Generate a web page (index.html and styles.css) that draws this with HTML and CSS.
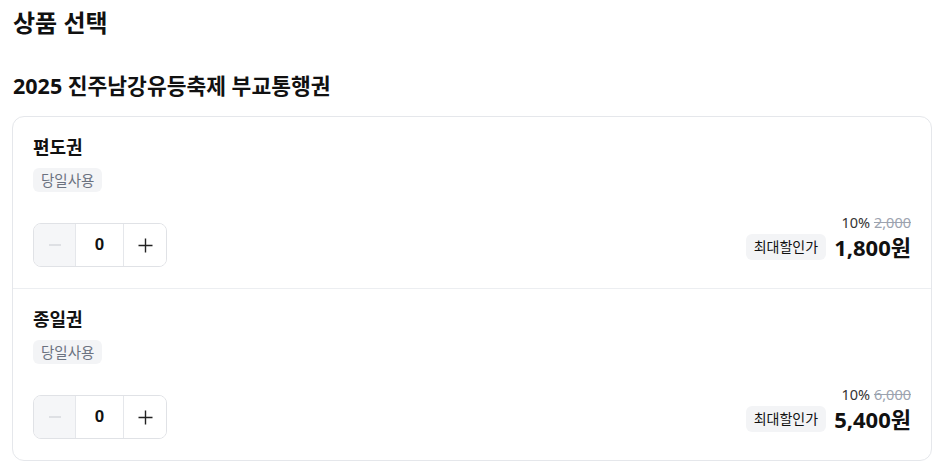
FILE: index.html
```html
<!DOCTYPE html>
<html lang="ko">
<head>
    <meta charset="UTF-8">
    <meta name="viewport" content="width=device-width, initial-scale=1.0">
    <title>상품 선택</title>
    <link rel="stylesheet" href="styles.css">
</head>
<body>
    <h1 class="page-title">상품 선택</h1>
    <h2 class="group-title">2025 진주남강유등축제 부교통행권</h2>
    <div class="product-card">
        <div class="product">
            <div class="product-name">편도권</div>
            <span class="tag">당일사용</span>
            <div class="product-bottom">
                <div class="stepper">
                    <button class="step minus" disabled aria-label="빼기">
                        <svg width="14" height="14" viewBox="0 0 14 14"><path d="M1 7h12" stroke="currentColor" stroke-width="1.3"/></svg>
                    </button>
                    <span class="count">0</span>
                    <button class="step plus" aria-label="더하기">
                        <svg width="15" height="15" viewBox="0 0 15 15"><path d="M0.5 7.5h14M7.5 0.5v14" stroke="currentColor" stroke-width="1.4"/></svg>
                    </button>
                </div>
                <div class="price-box">
                    <div class="discount">10% <s>2,000</s></div>
                    <div class="final">
                        <span class="badge">최대할인가</span>
                        <span class="price">1,800원</span>
                    </div>
                </div>
            </div>
        </div>
        <div class="product">
            <div class="product-name">종일권</div>
            <span class="tag">당일사용</span>
            <div class="product-bottom">
                <div class="stepper">
                    <button class="step minus" disabled aria-label="빼기">
                        <svg width="14" height="14" viewBox="0 0 14 14"><path d="M1 7h12" stroke="currentColor" stroke-width="1.3"/></svg>
                    </button>
                    <span class="count">0</span>
                    <button class="step plus" aria-label="더하기">
                        <svg width="15" height="15" viewBox="0 0 15 15"><path d="M0.5 7.5h14M7.5 0.5v14" stroke="currentColor" stroke-width="1.4"/></svg>
                    </button>
                </div>
                <div class="price-box">
                    <div class="discount">10% <s>6,000</s></div>
                    <div class="final">
                        <span class="badge">최대할인가</span>
                        <span class="price">5,400원</span>
                    </div>
                </div>
            </div>
        </div>
    </div>
</body>
</html>
```

FILE: styles.css
```css
body {
    margin: 0;
    padding: 0 13px 0 12px;
    font-family: "Noto Sans", "Noto Sans CJK KR", sans-serif;
    background: #ffffff;
    color: #111111;
}
.page-title {
    margin: 0;
    padding: 6px 0 0 1px;
    font-size: 24px;
    line-height: 34px;
    font-weight: 700;
}
.group-title {
    margin: 0;
    padding: 32px 0 0 1px;
    font-size: 21.5px;
    line-height: 28px;
    font-weight: 700;
}
.product-card {
    margin-top: 16px;
    border: 1px solid #e5e7eb;
    border-radius: 12px;
}
.product {
    padding: 19px 20px 21px;
    display: flex;
    flex-direction: column;
    align-items: flex-start;
}
.product + .product {
    border-top: 1px solid #eceef1;
}
.product-name {
    font-size: 18px;
    line-height: 22px;
    font-weight: 700;
}
.tag {
    margin-top: 10px;
    padding: 0 8px;
    background: #f3f4f6;
    border-radius: 6px;
    font-size: 14.5px;
    line-height: 24px;
    color: #6b7280;
}
.product-bottom {
    margin-top: 20px;
    align-self: stretch;
    display: flex;
    justify-content: space-between;
    align-items: flex-end;
}
.stepper {
    display: flex;
    height: 44px;
    border: 1px solid #e0e2e6;
    border-radius: 8px;
    overflow: hidden;
    box-sizing: border-box;
}
.step {
    width: 41px;
    border: none;
    background: #ffffff;
    color: #222222;
    padding: 0;
    display: flex;
    align-items: center;
    justify-content: center;
}
.step.minus {
    background: #f5f6f8;
    color: #d6d9de;
}
.step.plus {
    width: 42px;
}
.count {
    width: 47px;
    border-left: 1px solid #e5e7eb;
    border-right: 1px solid #e5e7eb;
    display: flex;
    align-items: center;
    justify-content: center;
    font-family: "Liberation Sans", sans-serif;
    font-size: 17px;
    font-weight: 700;
}
.price-box {
    display: flex;
    flex-direction: column;
    align-items: flex-end;
    padding-bottom: 7px;
}
.discount {
    font-size: 14.5px;
    line-height: 20px;
    color: #333333;
}
.discount s {
    color: #9ca3af;
}
.final {
    margin-top: 2px;
    display: flex;
    align-items: center;
    gap: 8px;
}
.badge {
    padding: 0 8px;
    background: #f3f4f6;
    border-radius: 6px;
    font-size: 14px;
    line-height: 26px;
}
.price {
    font-size: 22px;
    line-height: 26px;
    font-weight: 700;
}
```
